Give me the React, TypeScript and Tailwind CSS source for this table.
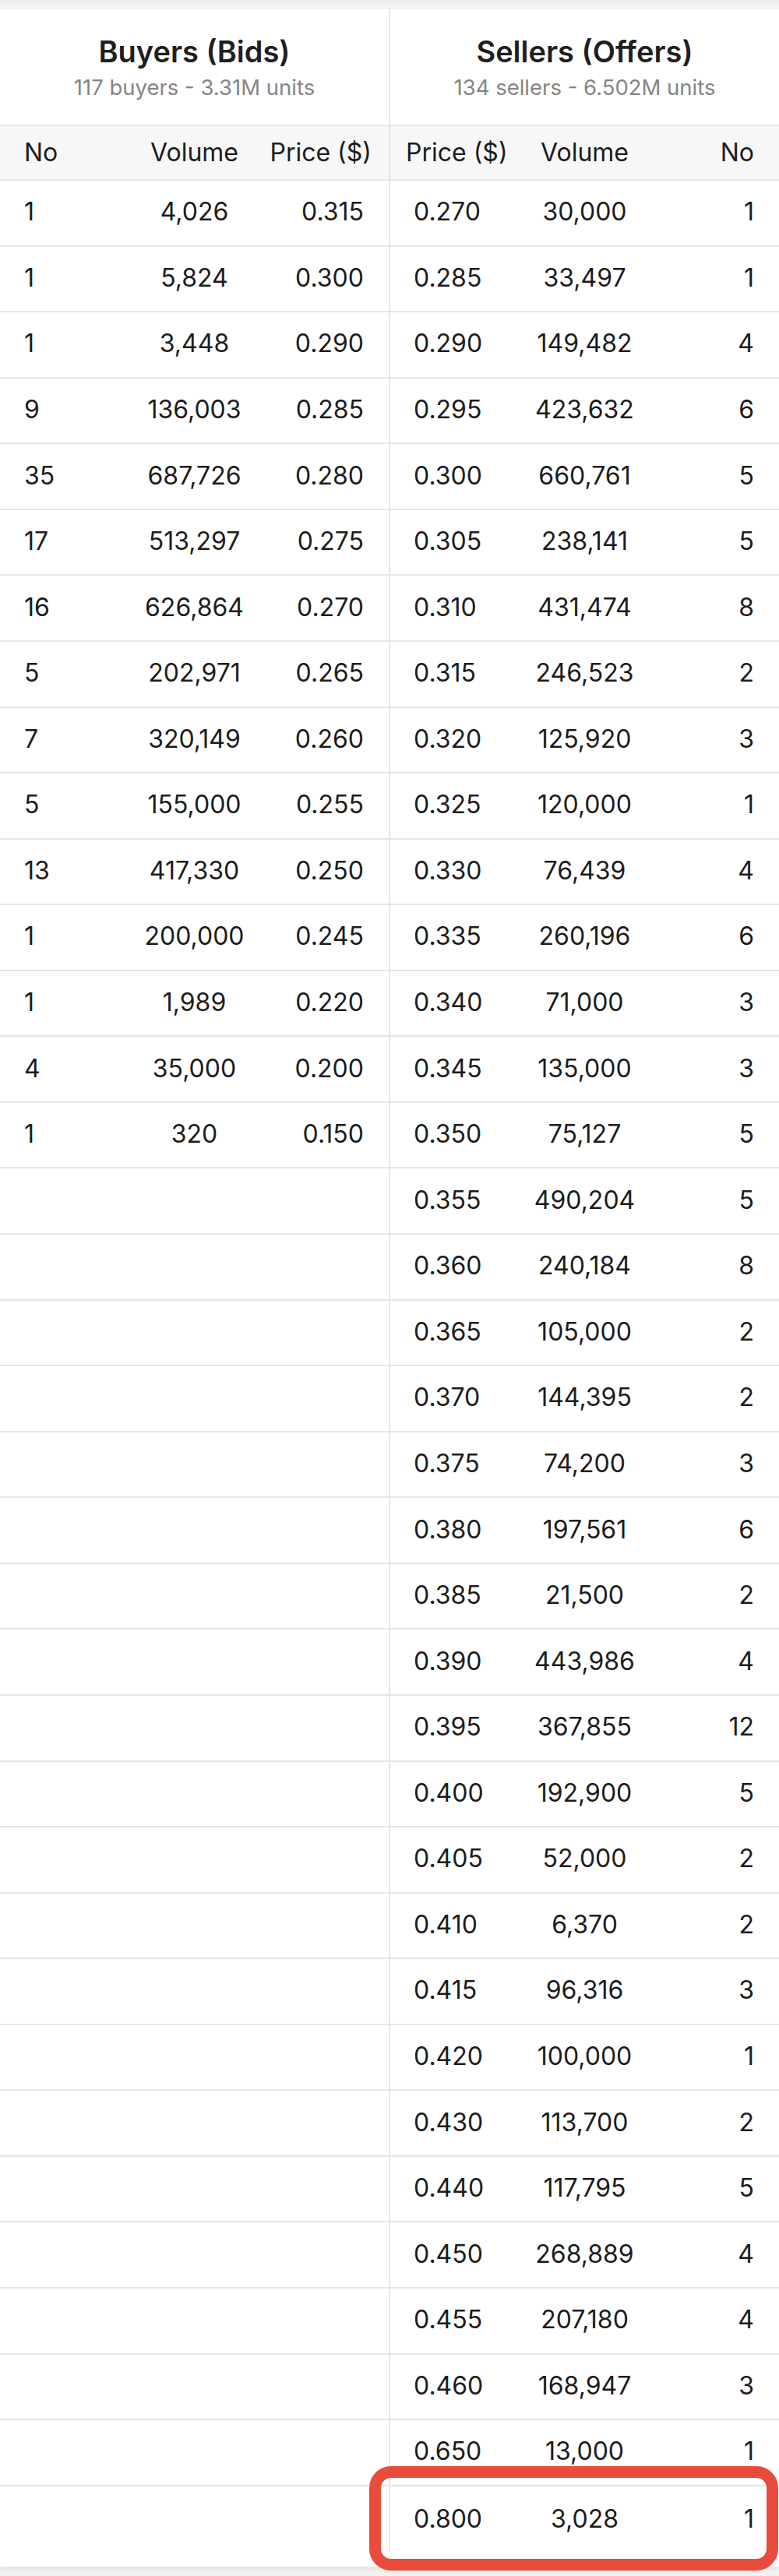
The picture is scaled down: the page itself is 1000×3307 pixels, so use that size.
const bids: [string, string, string][] = [
  ["1", "4,026", "0.315"],
  ["1", "5,824", "0.300"],
  ["1", "3,448", "0.290"],
  ["9", "136,003", "0.285"],
  ["35", "687,726", "0.280"],
  ["17", "513,297", "0.275"],
  ["16", "626,864", "0.270"],
  ["5", "202,971", "0.265"],
  ["7", "320,149", "0.260"],
  ["5", "155,000", "0.255"],
  ["13", "417,330", "0.250"],
  ["1", "200,000", "0.245"],
  ["1", "1,989", "0.220"],
  ["4", "35,000", "0.200"],
  ["1", "320", "0.150"],
];

const offers: [string, string, string][] = [
  ["0.270", "30,000", "1"],
  ["0.285", "33,497", "1"],
  ["0.290", "149,482", "4"],
  ["0.295", "423,632", "6"],
  ["0.300", "660,761", "5"],
  ["0.305", "238,141", "5"],
  ["0.310", "431,474", "8"],
  ["0.315", "246,523", "2"],
  ["0.320", "125,920", "3"],
  ["0.325", "120,000", "1"],
  ["0.330", "76,439", "4"],
  ["0.335", "260,196", "6"],
  ["0.340", "71,000", "3"],
  ["0.345", "135,000", "3"],
  ["0.350", "75,127", "5"],
  ["0.355", "490,204", "5"],
  ["0.360", "240,184", "8"],
  ["0.365", "105,000", "2"],
  ["0.370", "144,395", "2"],
  ["0.375", "74,200", "3"],
  ["0.380", "197,561", "6"],
  ["0.385", "21,500", "2"],
  ["0.390", "443,986", "4"],
  ["0.395", "367,855", "12"],
  ["0.400", "192,900", "5"],
  ["0.405", "52,000", "2"],
  ["0.410", "6,370", "2"],
  ["0.415", "96,316", "3"],
  ["0.420", "100,000", "1"],
  ["0.430", "113,700", "2"],
  ["0.440", "117,795", "5"],
  ["0.450", "268,889", "4"],
  ["0.455", "207,180", "4"],
  ["0.460", "168,947", "3"],
  ["0.650", "13,000", "1"],
  ["0.800", "3,028", "1"],
];

const rowCount = offers.length;

function Title({ title, sub }: { title: string; sub: string }) {
  return (
    <div className="flex h-[149px] flex-col items-center pt-[33px]">
      <div className="text-[38px] leading-[44px] font-semibold text-[#1f1f1f]">
        {title}
      </div>
      <div className="mt-[8px] text-[27.5px] leading-[32px] text-[#858585]">
        {sub}
      </div>
    </div>
  );
}

function BidsSide() {
  const rows = Array.from({ length: rowCount }, (_, i) => bids[i] ?? null);
  return (
    <div className="w-[499px] shrink-0">
      <Title title="Buyers (Bids)" sub="117 buyers - 3.31M units" />
      <div className="grid h-[72px] grid-cols-3 items-center border-y-2 border-[#e6e6e6] bg-[#f7f7f7]">
        <div className="pl-[31px]">No</div>
        <div className="text-center">Volume</div>
        <div className="pr-[22px] text-right">Price ($)</div>
      </div>
      {rows.map((r, i) => (
        <div
          key={i}
          className={
            i === rowCount - 1
              ? "grid h-[84.57px] grid-cols-3 items-center"
              : "grid h-[84.57px] grid-cols-3 items-center border-b-2 border-[#e6e6e6] pb-[2px]"
          }
        >
          {r && (
            <>
              <div className="pl-[31px]">{r[0]}</div>
              <div className="text-center">{r[1]}</div>
              <div className="pr-[32px] text-right">{r[2]}</div>
            </>
          )}
        </div>
      ))}
    </div>
  );
}

function OffersSide() {
  return (
    <div className="w-[499px] shrink-0">
      <Title title="Sellers (Offers)" sub="134 sellers - 6.502M units" />
      <div className="grid h-[72px] grid-cols-3 items-center border-y-2 border-[#e6e6e6] bg-[#f7f7f7]">
        <div className="pl-[20px]">Price ($)</div>
        <div className="text-center">Volume</div>
        <div className="pr-[32px] text-right">No</div>
      </div>
      {offers.map((r, i) => (
        <div
          key={i}
          className={
            i === rowCount - 1
              ? "relative grid h-[84.57px] grid-cols-3 items-center"
              : "grid h-[84.57px] grid-cols-3 items-center border-b-2 border-[#e6e6e6] pb-[2px]"
          }
        >
          <div className="pl-[30px]">{r[0]}</div>
          <div className="text-center">{r[1]}</div>
          <div className="pr-[32px] text-right">{r[2]}</div>
          {i === rowCount - 1 && (
            <div className="pointer-events-none absolute top-[-26px] left-[-27px] right-[1px] h-[134px] rounded-[28px] border-[15px] border-[#e74c3c]" />
          )}
        </div>
      ))}
    </div>
  );
}

export default function App() {
  return (
    <div
      className="min-h-[3307px] w-[1000px] bg-[#f2f2f2] text-[32px] leading-[40px] text-[#1c1c1c]"
      style={{ fontFamily: "Inter, 'Noto Sans', sans-serif" }}
    >
      <div className="h-[11px] border-b border-[#e9e9e9] bg-gradient-to-b from-[#ececec] to-[#f6f6f6]" />
      <div className="flex bg-white pb-[19px] shadow-[0_3px_6px_rgba(0,0,0,0.08)]">
        <BidsSide />
        <div className="w-[2px] shrink-0 bg-[#e6e6e6]" />
        <OffersSide />
      </div>
    </div>
  );
}
